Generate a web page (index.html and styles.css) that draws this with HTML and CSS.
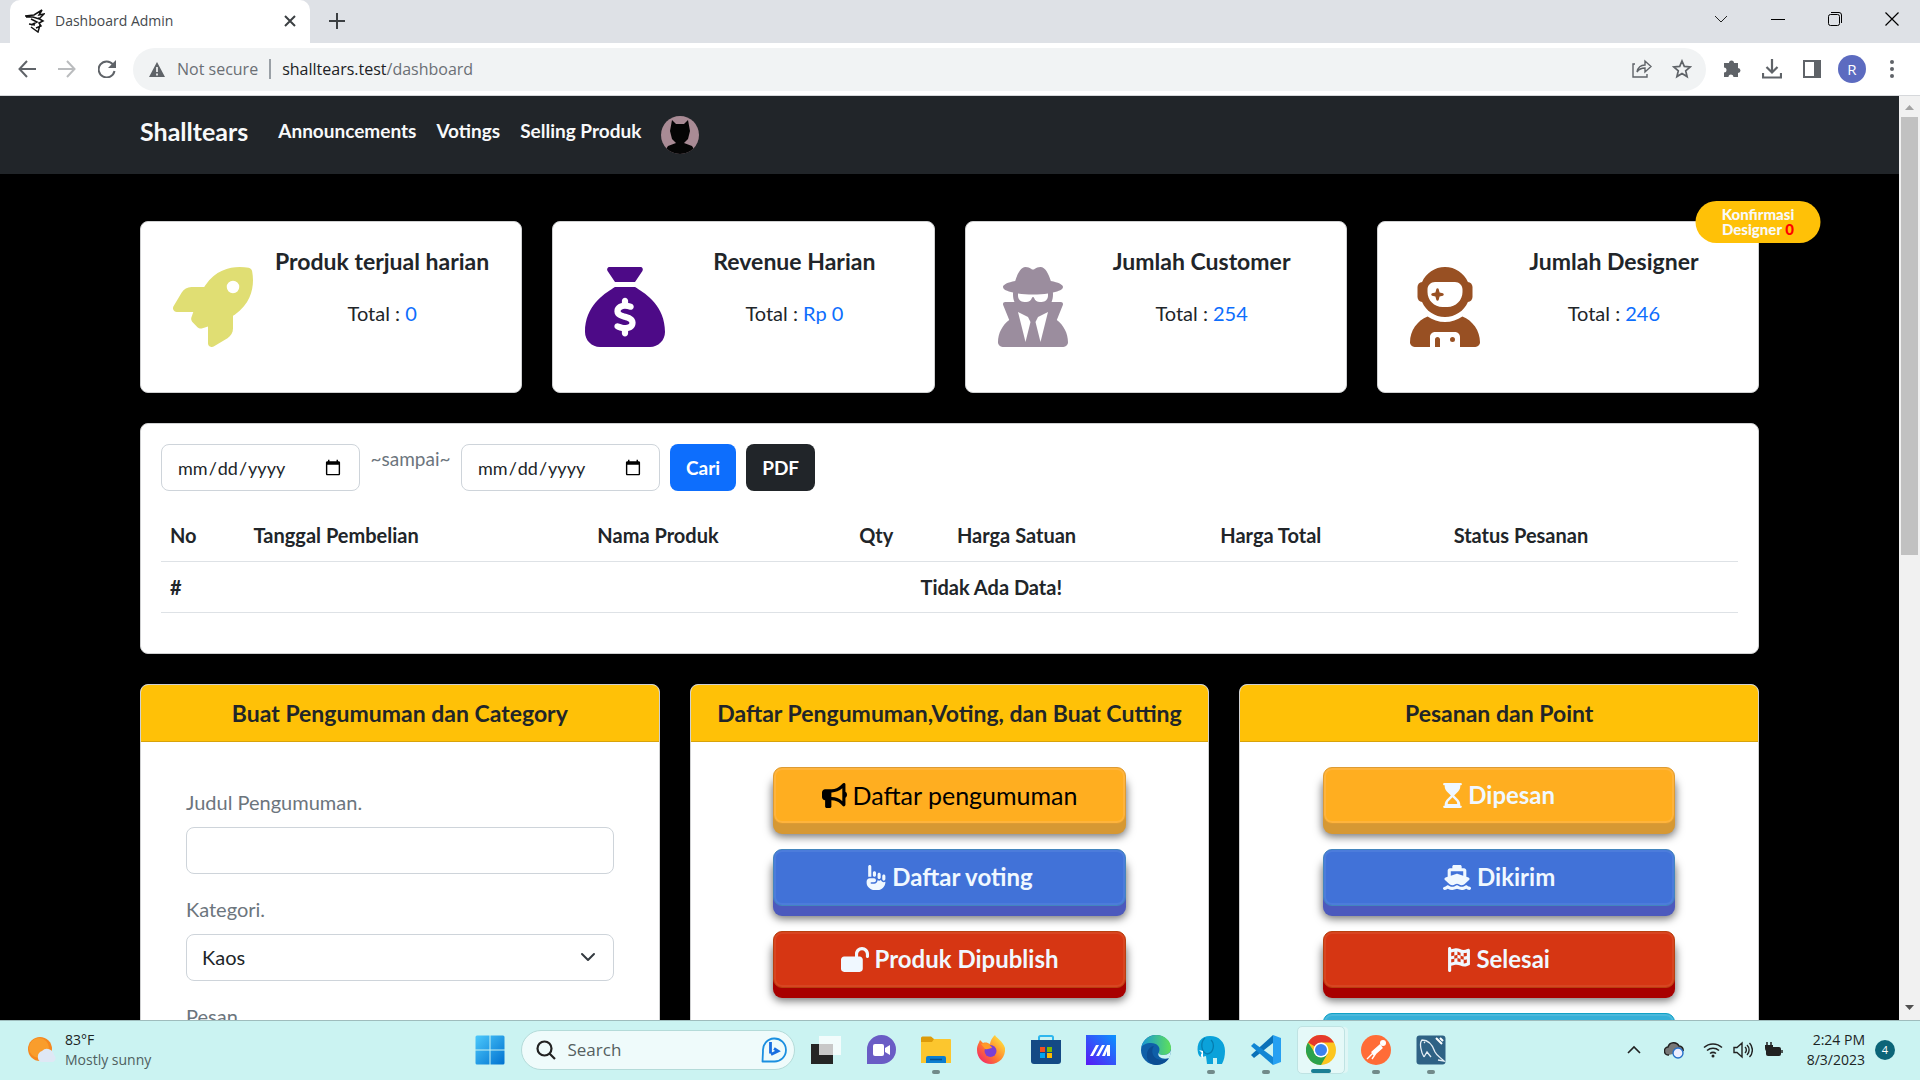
FILE: index.html
```html
<!DOCTYPE html>
<html lang="id">
<head>
<meta charset="utf-8">
<title>Dashboard Admin</title>
<link rel="stylesheet" href="styles.css">
</head>
<body>
<header class="browser">
  <div class="tabstrip">
    <div class="tab">
      <svg class="favicon" viewBox="0 0 20 24" fill="none" stroke="#111" stroke-width="1.500"><path d="M0 7l9-1 8-5-3 5 5-1-5 5-6-2-7 0M6 10l6 3-6 3M13 9l5 3-4 2 2 3-5 2M4 15l6 1M6 18l7 5 2-7"/></svg>
      <span class="tab-title">Dashboard Admin</span>
      <button class="plain" aria-label="Close tab"><svg width="12" height="12" viewBox="0 0 12 12" stroke="#3c4043" stroke-width="2"><path d="M1 1l10 10M11 1L1 11"/></svg></button>
    </div>
    <button class="plain newtab" aria-label="New tab"><svg width="16" height="16" viewBox="0 0 16 16" stroke="#3c4043" stroke-width="2"><path d="M8 0v16M0 8h16"/></svg></button>
    <div class="window-controls">
      <button class="plain" aria-label="Search tabs"><svg width="14" height="14" viewBox="0 0 14 14" fill="none" stroke="#222"><path d="M1 4l6 6 6-6"/></svg></button>
      <button class="plain" aria-label="Minimize"><svg width="14" height="14" viewBox="0 0 14 14" stroke="#000"><path d="M0 7.500h14"/></svg></button>
      <button class="plain" aria-label="Restore"><svg width="14" height="14" viewBox="0 0 14 14" fill="none" stroke="#000"><rect x=".5" y="2.500" width="11" height="11" rx="2"/><path d="M3 .5h8a2.500 2.500 0 0 1 2.500 2.500v8"/></svg></button>
      <button class="plain" aria-label="Close"><svg width="14" height="14" viewBox="0 0 14 14" stroke="#000" stroke-width="1.200"><path d="M.5.5l13 13M13.500.5l-13 13"/></svg></button>
    </div>
  </div>
  <div class="toolbar">
    <button class="plain" aria-label="Back"><svg width="18" height="18" viewBox="0 0 18 18" fill="none" stroke="#5f6368" stroke-width="2"><path d="M18 9H2M9 1L1.500 9 9 17"/></svg></button>
    <button class="plain" aria-label="Forward"><svg width="18" height="18" viewBox="0 0 18 18" fill="none" stroke="#babcbe" stroke-width="2"><path d="M0 9h16M9 1l7.500 8L9 17"/></svg></button>
    <button class="plain" aria-label="Reload"><svg width="18" height="18" viewBox="0 0 18 18"><path d="M15 4.500A8 8 0 1 0 16.500 11" fill="none" stroke="#5f6368" stroke-width="2"/><path d="M18 0v8h-8z" fill="#5f6368"/></svg></button>
    <div class="omnibox">
      <svg width="16" height="15" viewBox="0 0 16 15"><path d="M8 0l8 15H0z" fill="#5f6368"/><path d="M8 5v5M8 11.500v2" stroke="#fff" stroke-width="1.600"/></svg>
      <span class="muted">Not secure</span><span class="divider"></span>
      <span class="url">shalltears.test<span class="muted">/dashboard</span></span>
      <span class="omni-actions">
        <svg width="20" height="20" viewBox="0 0 20 20" fill="none" stroke="#5f6368" stroke-width="1.400"><path d="M3 5H1v13h14v-3M5 13c1-5 4-7 8-7V2l6 5.500L13 13V9c-4 0-6 1-8 4z"/></svg>
        <svg width="20" height="20" viewBox="0 0 20 20" fill="none" stroke="#5f6368" stroke-width="1.700"><path d="M10 2l2.300 5.400 5.900.5-4.500 3.900 1.400 5.800L10 14.500l-5.100 3.100 1.400-5.800-4.500-3.900 5.900-.5z"/></svg>
      </span>
    </div>
    <button class="plain" aria-label="Extensions"><svg width="20" height="20" viewBox="0 0 20 20" fill="#5f6368"><path d="M2 4h5a2.500 2.500 0 0 1 5 0h4v5a2.500 2.500 0 0 1 0 5v4h-4.500a2.500 2.500 0 0 0-5 0H2v-4.500a2.500 2.500 0 0 0 0-5z"/></svg></button>
    <button class="plain" aria-label="Downloads"><svg width="20" height="20" viewBox="0 0 20 20" fill="none" stroke="#5f6368" stroke-width="2.200"><path d="M10 0v13M4.500 8l5.500 5.500L15.500 8M1 14v4.500h18V14"/></svg></button>
    <button class="plain" aria-label="Side panel"><svg width="18" height="18" viewBox="0 0 18 18"><path d="M0 0h18v18H0zM2 2v14h9V2z" fill="#5f6368" fill-rule="evenodd"/></svg></button>
    <button class="plain profile" aria-label="Profile">R</button>
    <button class="plain" aria-label="Menu"><svg width="4" height="18" viewBox="0 0 4 18" fill="#5f6368"><circle cx="2" cy="2" r="2"/><circle cx="2" cy="9" r="2"/><circle cx="2" cy="16" r="2"/></svg></button>
  </div>
</header>

<div class="viewport">
  <div class="page">
    <nav class="navbar">
      <a class="brand" href="#">Shalltears</a>
      <a href="#">Announcements</a>
      <a href="#">Votings</a>
      <a href="#">Selling Produk</a>
      <a href="#" class="avatar" aria-label="Profil"><svg width="38" height="38" viewBox="0 0 38 38"><defs><clipPath id="av"><circle cx="19" cy="19" r="19"/></clipPath></defs><g clip-path="url(#av)"><path fill="#a98b95" d="M0 0h38v38H0z"/><path d="M11 4l4 4h8l4-4 2 11-2 8-4 4 8 3 5 8H2l5-8 8-3-4-4-2-8z" fill="#050505"/></g></svg></a>
    </nav>
    <main class="content">
      <section class="stats">
        <article class="card stat">
          <svg class="stat-icon" viewBox="0 0 512 512" fill="#e0de73"><path d="M156.600 384.900L125.700 354c-8.500-8.500-11.500-20.800-7.700-32.200c3-8.900 7-20.500 11.800-33.800L24 288c-8.600 0-16.600-4.600-20.900-12.100s-4.200-16.700 .2-24.100l52.500-88.500c13-21.900 36.500-35.300 61.900-35.300l82.300 0c2.400-4 4.800-7.700 7.200-11.300C289.100-4.100 411.100-8.100 483.900 5.300c11.600 2.100 20.600 11.200 22.800 22.800c13.400 72.900 9.300 194.800-111.400 276.700c-3.500 2.400-7.300 4.800-11.300 7.200v82.300c0 25.400-13.400 49-35.300 61.900l-88.500 52.500c-7.400 4.400-16.600 4.500-24.100 .2s-12.100-12.200-12.100-20.900V380.800c-14.100 4.900-26.400 8.900-35.700 11.900c-11.200 3.600-23.400 .5-31.800-7.800zM384 168a40 40 0 1 0 0-80 40 40 0 1 0 0 80z"/></svg>
          <div class="stat-text"><h2>Produk terjual harian</h2><p>Total : <a href="#">0</a></p></div>
        </article>
        <article class="card stat">
          <svg class="stat-icon" viewBox="0 0 512 512" fill="#4d0a87"><path d="M320 96H192L144.600 24.900C137.500 14.200 145.100 0 157.900 0H354.100c12.800 0 20.400 14.200 13.300 24.900L320 96zM192 128H320c3.800 2.500 8.100 5.300 13 8.400C389.700 172.700 512 250.900 512 416c0 53-43 96-96 96H96c-53 0-96-43-96-96C0 250.900 122.300 172.700 179 136.400l0 0 0 0c4.800-3.100 9.200-5.900 13-8.400zm84 88c0-11-9-20-20-20s-20 9-20 20v14c-7.600 1.700-15.200 4.400-22.200 8.500c-13.900 8.300-25.900 22.800-25.800 43.900c.1 20.300 12 33.100 24.700 40.700c11 6.600 24.700 10.800 35.600 14l1.700 .5c12.600 3.800 21.800 6.800 28 10.700c5.100 3.200 5.800 5.400 5.900 8.200c.1 5-1.800 8-5.900 10.500c-5 3.100-12.900 5-21.400 4.700c-11.100-.4-21.500-3.900-35.100-8.500c-2.300-.8-4.700-1.600-7.200-2.400c-10.500-3.500-21.800 2.200-25.300 12.600s2.200 21.800 12.600 25.300c1.900 .6 4 1.300 6.100 2.100l0 0 0 0c8.300 2.900 17.900 6.200 28.200 8.400V424c0 11 9 20 20 20s20-9 20-20V410.200c8-1.700 16-4.500 23.200-9c14.300-8.900 25.100-24.100 24.800-45c-.3-20.300-11.700-33.400-24.600-41.600c-11.500-7.200-25.900-11.600-37.100-15l-.7-.2c-12.800-3.900-21.900-6.700-28.300-10.500c-5.200-3.100-5.300-4.900-5.300-6.700c0-3.700 1.400-6.500 6.200-9.300c5.400-3.200 13.600-5.100 21.500-5c9.600 .1 20.200 2.200 31.200 5.200c10.700 2.800 21.600-3.500 24.500-14.200s-3.500-21.600-14.200-24.500c-6.500-1.700-13.700-3.400-21.100-4.700V216z"/></svg>
          <div class="stat-text"><h2>Revenue Harian</h2><p>Total : <a href="#">Rp 0</a></p></div>
        </article>
        <article class="card stat">
          <svg class="stat-icon narrow" viewBox="0 0 448 512" fill="#9b8d9e"><path d="M224 16c-6.700 0-10.800-2.800-15.500-6.100C201.900 5.400 194 0 176 0c-30.500 0-52 43.700-66 89.400C62.700 98.100 32 112.200 32 128c0 14.300 25 27.100 64.600 35.900c-.4 4-.6 8-.6 12.100c0 17 3.300 33.200 9.300 48H45.400C38 224 32 230 32 237.400c0 1.700 .3 3.400 1 5l38.800 96.900C28.200 371.800 0 423.800 0 482.300C0 498.700 13.300 512 29.700 512H418.300c16.400 0 29.700-13.300 29.700-29.700c0-58.500-28.200-110.400-71.700-143L415 242.400c.6-1.600 1-3.300 1-5c0-7.400-6-13.400-13.400-13.400H342.700c6-14.800 9.300-31 9.300-48c0-4.100-.2-8.100-.6-12.100C391 155.100 416 142.300 416 128c0-15.800-30.700-29.900-78-38.600C324 43.700 302.500 0 272 0c-18 0-25.900 5.400-32.500 9.900c-4.800 3.300-8.800 6.100-15.500 6.100zm56 208H267.600c-16.500 0-31.100-10.600-36.300-26.200c-2.300-7-12.200-7-14.500 0c-5.200 15.600-19.900 26.200-36.300 26.200H168c-22.100 0-40-17.900-40-40V169.600c28.200 4.100 61 6.400 96 6.400s67.800-2.300 96-6.400V184c0 22.100-17.900 40-40 40zm-88 96l16 32L176 480 128 288l64 32zm128-32L272 480 240 352l16-32 64-32z"/></svg>
          <div class="stat-text"><h2>Jumlah Customer</h2><p>Total : <a href="#">254</a></p></div>
        </article>
        <article class="card stat">
          <svg class="stat-icon narrow" viewBox="0 0 448 512" fill="#985023"><path d="M370.700 96.100C346.100 39.500 289.700 0 224 0S101.900 39.500 77.300 96.100C60.900 97.500 48 111.200 48 128v64c0 16.800 12.900 30.500 29.300 31.900C101.900 280.500 158.300 320 224 320s122.100-39.500 146.700-96.100c16.400-1.400 29.300-15.100 29.300-31.900V128c0-16.800-12.900-30.500-29.300-31.900zM336 144v16c0 53-43 96-96 96H208c-53 0-96-43-96-96V144c0-26.500 21.500-48 48-48H288c26.500 0 48 21.500 48 48zM189.300 162.700l-6-21.200c-.9-3.300-3.900-5.500-7.300-5.500s-6.400 2.200-7.300 5.500l-6 21.200-21.200 6c-3.300 .9-5.500 3.900-5.500 7.300s2.200 6.400 5.500 7.300l21.200 6 6 21.200c.9 3.300 3.900 5.500 7.300 5.500s6.400-2.200 7.300-5.500l6-21.200 21.200-6c3.300-.9 5.500-3.900 5.500-7.300s-2.200-6.400-5.500-7.300l-21.200-6zM112.700 316.500C46.700 342.600 0 407 0 482.300C0 498.700 13.300 512 29.700 512H128V448c0-17.700 14.300-32 32-32H288c17.700 0 32 14.300 32 32v64l98.300 0c16.400 0 29.700-13.300 29.700-29.700c0-75.300-46.700-139.700-112.700-165.800C303.900 338.800 265.500 352 224 352s-79.900-13.200-111.300-35.500zM176 448c-8.800 0-16 7.200-16 16v48h32V464c0-8.800-7.200-16-16-16zm96 32a16 16 0 1 0 0-32 16 16 0 1 0 0 32z"/></svg>
          <div class="stat-text"><h2>Jumlah Designer</h2><p>Total : <a href="#">246</a></p></div>
          <a class="pill" href="#">Konfirmasi<br>Designer <span>0</span></a>
        </article>
      </section>

      <section class="card report">
        <form class="filter">
          <input class="field" type="date" aria-label="Dari tanggal">
          <span class="sampai">~sampai~</span>
          <input class="field" type="date" aria-label="Sampai tanggal">
          <button class="btn blue" type="button">Cari</button>
          <button class="btn dark" type="button">PDF</button>
        </form>
        <table class="orders">
          <colgroup><col class="c-no"><col class="c-date"><col class="c-name"><col class="c-qty"><col class="c-price"><col class="c-total"><col></colgroup>
          <thead><tr><th>No</th><th>Tanggal Pembelian</th><th>Nama Produk</th><th>Qty</th><th>Harga Satuan</th><th>Harga Total</th><th>Status Pesanan</th></tr></thead>
          <tbody><tr><th>#</th><td colspan="6">Tidak Ada Data!</td></tr></tbody>
        </table>
      </section>

      <section class="panels">
        <article class="card panel">
          <h2 class="panel-head">Buat Pengumuman dan Category</h2>
          <form class="form">
            <label for="judul">Judul Pengumuman.</label>
            <input class="field" id="judul" type="text">
            <label for="kategori">Kategori.</label>
            <span class="select"><select class="field" id="kategori"><option>Kaos</option></select><svg width="16" height="16" viewBox="0 0 16 16" fill="none" stroke="#343a40" stroke-width="2" stroke-linecap="round" stroke-linejoin="round"><path d="M2 5l6 6 6-6"/></svg></span>
            <label for="pesan">Pesan.</label>
            <textarea class="field" id="pesan" rows="3"></textarea>
          </form>
        </article>
        <article class="card panel">
          <h2 class="panel-head">Daftar Pengumuman,Voting, dan Buat Cutting</h2>
          <div class="actions">
            <button class="push amber black"><svg width="25" height="25" viewBox="0 0 512 512"><path d="M480 32c0-12.900-7.800-24.600-19.800-29.600s-25.700-2.200-34.900 6.900L381.700 53c-48 48-113.100 75-181 75H192 160 64c-35.300 0-64 28.700-64 64v96c0 35.300 28.700 64 64 64l0 128c0 17.700 14.300 32 32 32h64c17.700 0 32-14.300 32-32V352l8.700 0c67.900 0 133 27 181 75l43.600 43.600c9.200 9.200 22.900 11.900 34.900 6.900s19.800-16.600 19.800-29.600V300.400c18.600-8.800 32-32.500 32-60.400s-13.400-51.600-32-60.400V32zm-64 76.700V240 371.300C357.200 317.800 280.500 288 200.700 288H192V192h8.700c79.800 0 156.500-29.800 215.300-83.300z"/></svg>Daftar pengumuman</button>
            <button class="push azure"><svg width="20" height="25" viewBox="0 0 384 512"><path d="M32 32C32 14.300 46.300 0 64 0S96 14.300 96 32V240H32V32zM224 192c0-17.700 14.300-32 32-32s32 14.300 32 32v64c0 17.700-14.300 32-32 32s-32-14.300-32-32V192zm-64-64c17.700 0 32 14.300 32 32v48c0 17.700-14.300 32-32 32s-32-14.300-32-32V160c0-17.700 14.300-32 32-32zm160 96c0-17.700 14.300-32 32-32s32 14.300 32 32v64c0 17.700-14.300 32-32 32s-32-14.300-32-32V224zm-96 88l0-.6c9.400 5.400 20.300 8.600 32 8.600c13.200 0 25.400-4 35.600-10.800c8.700 24.900 32.500 42.800 60.400 42.800c11.700 0 22.600-3.100 32-8.600V352c0 88.400-71.600 160-160 160H162.300c-42.400 0-83.100-16.900-113.100-46.900L37.500 453.500C13.500 429.500 0 396.900 0 363V336c0-35.300 28.700-64 64-64h88c22.100 0 40 17.900 40 40s-17.900 40-40 40H96c-8.800 0-16 7.200-16 16s7.200 16 16 16h56c39.800 0 72-32.200 72-72z"/></svg>Daftar voting</button>
            <button class="push red"><svg width="28" height="25" viewBox="0 0 576 512"><path d="M352 144c0-44.200 35.800-80 80-80s80 35.800 80 80v48c0 17.700 14.300 32 32 32s32-14.300 32-32V144C576 64.500 511.500 0 432 0S288 64.500 288 144v48H64c-35.300 0-64 28.700-64 64V448c0 35.300 28.700 64 64 64H384c35.300 0 64-28.700 64-64V256c0-35.300-28.700-64-64-64H352V144z"/></svg>Produk Dipublish</button>
          </div>
        </article>
        <article class="card panel">
          <h2 class="panel-head">Pesanan dan Point</h2>
          <div class="actions">
            <button class="push amber"><svg width="19" height="25" viewBox="0 0 384 512"><path d="M0 24C0 10.700 10.700 0 24 0H360c13.300 0 24 10.700 24 24s-10.700 24-24 24h-8V67c0 40.300-16 79-44.500 107.500L225.900 256l81.500 81.500C336 366 352 404.700 352 445v19h8c13.300 0 24 10.700 24 24s-10.700 24-24 24H24c-13.300 0-24-10.700-24-24s10.700-24 24-24h8V445c0-40.300 16-79 44.500-107.500L158.100 256 76.500 174.500C48 146 32 107.300 32 67V48H24C10.700 48 0 37.300 0 24zM192 289.900l-81.500 81.500C91 391 96 400 96 432H288c0-32-5-41-14.500-60.500L192 289.900z" fill-rule="evenodd"/></svg>Dipesan</button>
            <button class="push azure"><svg width="28" height="25" viewBox="0 0 576 512"><path d="M192 32c0-17.700 14.300-32 32-32H352c17.700 0 32 14.300 32 32V64h48c26.500 0 48 21.500 48 48V240l44.400 14.800c23.100 7.700 29.500 37.500 11.500 53.900l-101 92.600c-16.200 9.400-34.700 15.100-50.900 15.100c-19.600 0-40.800-7.700-59.200-20.300c-22.100-15.500-51.600-15.500-73.700 0c-17.100 11.800-38 20.300-59.200 20.300c-16.200 0-34.700-5.700-50.900-15.100l-101-92.600c-18-16.500-11.600-46.200 11.500-53.900L96 240V112c0-26.500 21.500-48 48-48h48V32zM160 218.700l107.800-35.900c13.100-4.400 27.300-4.400 40.500 0L416 218.700V128H160v90.700zM306.500 421.900C329 437.400 356.500 448 384 448c26.900 0 55.400-10.800 77.400-26.100l0 0c11.900-8.500 28.100-7.800 39.200 1.700c14.400 11.900 32.500 21 50.600 25.200c17.200 4 27.900 21.200 23.900 38.400s-21.200 27.900-38.400 23.900c-24.500-5.700-44.900-16.500-58.200-25C449.500 501.700 417 512 384 512c-31.900 0-60.600-9.900-80.400-18.900c-5.800-2.700-11.100-5.300-15.600-7.700c-4.500 2.400-9.700 5.100-15.600 7.700c-19.800 9-48.500 18.900-80.400 18.900c-33 0-65.500-10.300-94.500-25.800c-13.400 8.400-33.700 19.300-58.200 25c-17.200 4-34.400-6.700-38.400-23.900s6.700-34.400 23.900-38.400c18.100-4.200 36.200-13.300 50.600-25.200c11.100-9.400 27.300-10.100 39.200-1.700l0 0C136.700 437.200 165.100 448 192 448c27.500 0 55-10.600 77.500-26.100c11.100-7.900 25.900-7.900 37 0z"/></svg>Dikirim</button>
            <button class="push red"><svg width="22" height="25" viewBox="0 0 448 512"><path d="M32 0C49.700 0 64 14.300 64 32V48l69-17.200c38.100-9.500 78.300-5.100 113.500 12.500c46.300 23.200 100.800 23.200 147.100 0l9.600-4.800C423.800 28.100 448 43.100 448 66.100V345.800c0 13.300-8.300 25.300-20.800 30l-34.700 13c-46.200 17.300-97.600 14.600-141.700-7.400c-37.900-19-81.300-23.700-122.500-13.400L64 384v96c0 17.700-14.300 32-32 32s-32-14.300-32-32V400 334 64 32C0 14.300 14.300 0 32 0zM64 187.100l64-13.900v65.500L64 252.600V318l48.800-12.200c5.100-1.300 10.100-2.400 15.200-3.300V238.700l38.900-8.400c8.300-1.800 16.700-2.500 25.100-2.100l0-64c13.600 .4 27.200 2.600 40.400 6.400l23.600 6.900v66.700l-41.700-12.300c-7.300-2.100-14.800-3.400-22.300-3.800v71.400c21.800 1.900 43.300 6.700 64 14.400V244.200l22.700 6.700c13.500 4 27.300 6.400 41.300 7.400V194c-7.800-.8-15.600-2.300-23.200-4.500l-40.800-12v-62c-13-3.800-25.800-8.800-38.200-15c-8.200-4.100-16.900-7-25.800-8.800v72.400c-13-.4-26 .8-38.700 3.600L128 173.200V98L64 114v73.100zM320 335.700c16.800 1.500 33.900-.7 50-6.800l14-5.200V251.900l-7.900 1.800c-18.400 4.300-37.300 5.700-56.100 4.500v77.400zm64-149.400V115.400c-20.900 6.100-42.400 9.100-64 9.100V194c13.900 1.400 28 .5 41.700-2.600l22.300-5.200z"/></svg>Selesai</button>
            <button class="push cyan" aria-label="Point"></button>
          </div>
        </article>
      </section>
    </main>
  </div>
  <div class="scrollbar">
    <svg width="9" height="6" viewBox="0 0 9 6"><path d="M4.500 0L9 5H0z" fill="#a3a3a3"/></svg>
    <div class="thumb"></div>
    <svg width="9" height="6" viewBox="0 0 9 6"><path d="M4.500 5L9 0H0z" fill="#505050"/></svg>
  </div>
</div>

<footer class="taskbar">
  <div class="weather">
    <svg width="30" height="28" viewBox="0 0 30 28"><circle cx="13" cy="13" r="12" fill="#f5871f"/><circle cx="12" cy="12" r="10" fill="#f99d2c"/><path d="M14 26a6 6 0 0 1 1-11 7 7 0 0 1 12 4 4 4 0 0 1-1 7z" fill="#dfe8f5"/></svg>
    <div>83°F<br><span>Mostly sunny</span></div>
  </div>
  <div class="apps">
    <button class="app" aria-label="Start"><svg viewBox="0 0 30 30"><defs><linearGradient id="win" x1="0" y1="0" x2="1" y2="1"><stop offset="0" stop-color="#4cc8fb"/><stop offset="1" stop-color="#0071d0"/></linearGradient></defs><path fill="url(#win)" d="M2 .5h12.500v14H.5V2A1.500 1.500 0 0 1 2 .5zM15.500.5H28A1.500 1.500 0 0 1 29.500 2v12.500h-14zM.5 15.500h14v14H2A1.500 1.500 0 0 1 .5 28zM15.500 15.500h14V28a1.500 1.500 0 0 1-1.500 1.500H15.500z"/></svg></button>
    <div class="search">
      <svg width="20" height="20" viewBox="0 0 20 20" fill="none" stroke="#222" stroke-width="2.200"><circle cx="8.500" cy="8.500" r="7"/><path d="M13.500 13.500L19 19"/></svg>
      <input type="search" placeholder="Search" aria-label="Search">
      <svg width="26" height="26" viewBox="0 0 26 26" fill="none"><path d="M1.500 24.500L2 14A11.500 11.500 0 1 1 13 24.500z" stroke="#1b8fe0" stroke-width="1.800" stroke-linejoin="round"/><path d="M9.500 5v11.500M10 17.500l7-3.500-4-2.500" stroke="#1a6fe0" stroke-width="2.800"/></svg>
    </div>
    <button class="app" aria-label="Task view"><svg viewBox="0 0 30 30"><path fill="#252525" d="M0 9h22v20H0z"/><path fill="#fff" fill-opacity=".75" d="M8 1h22v19H8z"/></svg></button>
    <button class="app" aria-label="Chat"><svg viewBox="0 0 30 30"><path d="M1 29V15A14.500 14.500 0 1 1 15 29z" fill="#6a5cc5"/><rect x="7" y="9" width="11" height="12" rx="2" fill="#fff"/><path d="M19 13l5-3v10l-5-3z" fill="#fff"/></svg></button>
    <button class="app open" aria-label="File Explorer"><svg viewBox="0 0 30 30"><path d="M0 3a1.500 1.500 0 0 1 1.500-1.500H10L13 4v5H0z" fill="#dd9b0a"/><path d="M0 7h11l2-3h16a1 1 0 0 1 1 1v23H0z" fill="#fcc62e"/><path d="M5 28v-5a2 2 0 0 1 2-2h16a2 2 0 0 1 2 2v5z" fill="#0b7ed0"/><path d="M9 24.500h12" stroke="#064f8c" stroke-width="1.500"/></svg></button>
    <button class="app" aria-label="Firefox"><svg viewBox="0 0 30 30"><defs><linearGradient id="ff" x1="1" y1="0" x2="0" y2="1"><stop offset=".1" stop-color="#ffe63d"/><stop offset=".55" stop-color="#ff7a2d"/><stop offset="1" stop-color="#f0127a"/></linearGradient></defs><path d="M19 0c1 3 8 6 10 13C30 22 23 29 15 29S1 23 1 15c0-5 2-7 3-10l3 3c3-1 5 0 7 1 1-5 3-7 5-9z" fill="url(#ff)"/><circle cx="14.500" cy="16" r="6" fill="#7a3fd4"/><path d="M5 9c5-2 10 1 11 4-3 0-4 2-7 1z" fill="#ff9a2a"/></svg></button>
    <button class="app" aria-label="Store"><svg viewBox="0 0 30 30"><path d="M8 8V2.500A1.500 1.500 0 0 1 9.500 1h11A1.500 1.500 0 0 1 22 2.500V8" fill="none" stroke="#2fb7ee" stroke-width="2"/><path d="M0 5h30v21a3 3 0 0 1-3 3H3a3 3 0 0 1-3-3z" fill="#144a85"/><path fill="#f25022" d="M9 12h5v5H9z"/><path fill="#7fba00" d="M16 12h5v5h-5z"/><path fill="#00a4ef" d="M9 18h5v5H9z"/><path fill="#ffb900" d="M16 18h5v5h-5z"/></svg></button>
    <button class="app" aria-label="MyASUS"><svg viewBox="0 0 30 30"><defs><linearGradient id="as" x1="1" y1="0" x2="0" y2="1"><stop offset="0" stop-color="#0a94ff"/><stop offset="1" stop-color="#5a17f5"/></linearGradient></defs><path fill="url(#as)" d="M0 0h30v30H0z"/><path d="M4 21l6-11h3L7 21zM10 21l6-11h3l-6 11zM16 21l5-11h3v11h-3v-5l-2 5z" fill="#fff"/></svg></button>
    <button class="app" aria-label="Edge"><svg viewBox="0 0 30 30"><defs><linearGradient id="ed"><stop offset="0" stop-color="#1596d8"/><stop offset="1" stop-color="#5fe05a"/></linearGradient></defs><circle cx="15" cy="15" r="15" fill="#0f5fa8"/><path d="M0 13C2 5 8 0 15 0c9 0 15 6 15 13 0 5-4 7-8 7-3 0-5-1-4-3 2-5-2-9-8-9-5 0-9 2-10 5z" fill="url(#ed)"/><path d="M13 11c-4 5-1 14 8 14 3 0 5-1 7-2-2 4-7 7-12 7C8 30 5 24 6 18c1-4 4-7 7-7z" fill="#0c4d93"/><path d="M18 17c-1 2 1 3 4 3s7-1 8-5c0 4-1 6-2 8-6 2-13-1-10-6z" fill="#cbf3f2"/></svg></button>
    <button class="app open" aria-label="Elephant"><svg viewBox="0 0 30 30"><path d="M2 18C0 8 5 1 14 1c9 0 15 6 15 15 0 5-1 9-3 13h-5v-6h-4v6h-6l-1-8-4 1c-2 0-3-1-4-4z" fill="#0ba2da"/><path d="M9 3c-5 4-4 14 2 16 7-1 8-10 4-14" fill="none" stroke="#067db0" stroke-width="1.300"/><path d="M3 15l4 1v7c-2-1-3-3-1-5z" fill="#fff"/></svg></button>
    <button class="app open" aria-label="VS Code"><svg viewBox="0 0 30 30"><path d="M22 0l8 3v24l-8 3z" fill="#26a0f2"/><path d="M22 0v8L3 23l-3-3z" fill="#0a71b8"/><path d="M22 30v-8L3 8l-3 3z" fill="#1186d4"/></svg></button>
    <button class="app open active" aria-label="Chrome"><svg viewBox="0 0 30 30"><circle cx="15" cy="15" r="15" fill="#fcc61f"/><path d="M15 15L2 7.500A15 15 0 0 1 28 7.500H15z" fill="#e53a2c"/><path d="M2 7.500A15 15 0 0 0 15 30l6.500-11.200L9 18z" fill="#2ba24c"/><circle cx="15" cy="15" r="7.500" fill="#fff"/><circle cx="15" cy="15" r="6" fill="#3b82f0"/></svg></button>
    <button class="app open" aria-label="Postman"><svg viewBox="0 0 30 30"><circle cx="15" cy="15" r="15" fill="#ff6c37"/><circle cx="22" cy="8" r="3" fill="#fff"/><path d="M19 10l-8 7 2 3 8-7zM12 18l-6 6M17 15l-6 9" fill="#fff" stroke="#fff" stroke-width="1.400"/></svg></button>
    <button class="app open" aria-label="MySQL Workbench"><svg viewBox="0 0 30 30"><rect x=".5" y=".5" width="29" height="29" rx="3" fill="#2f6285"/><path d="M8 22C5 17 3 8 6 5c7 0 11 6 13 12 2 4 5 5 9 9l-6-1M8 22l3-5 4 5M8 7l1 1" fill="none" stroke="#e5eef4" stroke-width="1.300"/><path d="M20 3l6 6M24 3l3 3" stroke="#fff" stroke-width="2"/></svg></button>
  </div>
  <div class="tray">
    <svg width="14" height="14" viewBox="0 0 14 14" fill="none" stroke="#222" stroke-width="1.600"><path d="M1 10l6-6 6 6"/></svg>
    <svg class="cloud" width="20" height="18" viewBox="0 0 20 18"><path d="M5 14a4 4 0 0 1-1-8 6 6 0 0 1 11-1 4 4 0 0 1 4 5" fill="#777" stroke="#222" stroke-width="1.500"/><circle cx="14" cy="12" r="5" fill="#eef" stroke="#2770c8" stroke-width="1.400"/></svg>
    <div class="status">
      <svg width="20" height="18" viewBox="0 0 20 18" fill="none" stroke="#222" stroke-width="1.500"><path d="M1 6.500a13 13 0 0 1 18 0M4 9.500a9 9 0 0 1 12 0M7 12.500a5 5 0 0 1 6 0"/><circle cx="10" cy="15" r="1.500" fill="#222" stroke="none"/></svg>
      <svg width="20" height="18" viewBox="0 0 20 18" fill="none" stroke="#222" stroke-width="1.400"><path d="M1 6.500h3l5-4.500v14l-5-4.500H1zM12 6a4 4 0 0 1 0 6M14 4a7 7 0 0 1 0 10M16.500 2a10 10 0 0 1 0 14"/></svg>
      <svg width="20" height="18" viewBox="0 0 20 18"><rect x="3" y="6" width="15" height="9" rx="2" fill="#222"/><path d="M19 9v3M4 1v4M8 1v4" stroke="#222" stroke-width="1.500"/><path d="M2 4h8v3a4 4 0 0 1-8 0z" fill="#222"/></svg>
    </div>
    <div class="clock">2:24 PM<br>8/3/2023</div>
    <span class="count">4</span>
  </div>
</footer>
</body>
</html>
```
FILE: styles.css
```css
* { box-sizing: border-box; }
body {
  margin: 0;
  height: 100vh;
  display: flex;
  flex-direction: column;
  overflow: hidden;
  font-family: Lato, "Noto Sans", sans-serif;
  font-size: 20px;
  line-height: 30px;
  color: #212529;
  background: #000;
}
a { color: inherit; text-decoration: none; }
h2, p { margin: 0; }
button, input, select, textarea { font: inherit; color: inherit; }
svg { flex: none; display: block; }
.plain { display: flex; align-items: center; justify-content: center; padding: 0; border: 0; background: none; }

/* Browser window */
.browser, .taskbar { flex: none; font-family: "Open Sans", sans-serif; font-size: 15px; line-height: 20px; }
.tabstrip { display: flex; height: 43px; padding-left: 10px; background: #dee1e6; }
.tab { display: flex; align-items: center; gap: 10px; width: 300px; height: 43px; padding: 0 14px 2px 15px; background: #fff; border-radius: 10px 10px 0 0; }
.favicon { width: 20px; height: 24px; }
.tab-title { flex: 1; font-size: 14px; color: #45494d; }
.newtab { width: 54px; height: 42px; }
.window-controls { display: flex; margin-left: auto; }
.window-controls .plain { width: 57px; height: 37px; }
.toolbar { display: flex; align-items: center; gap: 12px; height: 53px; padding: 0 14px 0 13px; background: #fff; border-bottom: 1px solid #d6d8db; }
.toolbar .plain { width: 28px; height: 28px; }
.omnibox { flex: 1; display: flex; align-items: center; gap: 12px; height: 43px; padding: 0 14px 0 16px; border-radius: 22px; background: #f1f3f4; font-size: 16px; color: #202124; }
.omnibox .muted { color: #6b6f74; }
.divider { width: 2px; height: 20px; margin: 0 -1px; background: #9aa0a6; }
.omni-actions { display: flex; gap: 20px; margin-left: auto; }
.toolbar .profile { border-radius: 50%; background: #5c6bc0; color: #fff; }

/* Page */
.viewport { flex: 1; min-height: 0; display: flex; }
.page { flex: 1; min-width: 0; overflow: hidden; }
.navbar { display: flex; align-items: center; gap: 20px; height: 78px; padding: 0 140px; background: #212529; color: #f8f9fa; font-size: 19px; font-weight: 700; }
.navbar a { padding-bottom: 8px; }
.navbar .avatar { padding: 0; }
.navbar .brand { margin-right: 10px; font-size: 25px; }
.content { display: flex; flex-direction: column; gap: 30px; padding: 47px 140px 0; }
.card { position: relative; background: #fff; border: 1px solid #cfd0d1; border-radius: 8px; }
.stats { display: grid; grid-template-columns: repeat(4, 1fr); gap: 30px; }
.stat { display: flex; align-items: flex-start; gap: 10px; height: 172px; padding: 24px 20px 0 32px; }
.stat-icon { width: 80px; height: 80px; margin-top: 21px; }
.stat-icon.narrow { width: 70px; }
.stat-text { flex: 1; text-align: center; }
.stat-text h2, .panel-head { font-size: 23px; line-height: 30px; font-weight: 700; white-space: nowrap; }
.stat-text p { margin-top: 22px; }
.stat-text a { color: #0d6efd; }
.pill { position: absolute; top: 0; right: 0; transform: translate(50%, -50%); width: 125px; padding: 6px 0; border-radius: 21px; background: #ffc107; color: #f8f9fa; font-size: 15px; line-height: 15px; font-weight: 900; text-align: center; }
.pill span { color: #f00; }

.report { padding: 20px 20px 40px; }
.filter { display: flex; align-items: flex-start; gap: 10px; margin-bottom: 19px; }
.field { width: 100%; height: 47px; padding: 0 15px; border: 1px solid #ced4da; border-radius: 8px; background: #fff; }
.filter .field { width: 199px; font-size: 18px; }
.sampai { color: #6c757d; height: 32px; width: 81px; font-size: 19px; text-align: center; }
.btn { height: 47px; padding: 0 16px; border: 0; border-radius: 8px; color: #fff; font-size: 19px; font-weight: 700; }
.blue { background: #0d6efd; }
.dark { background: #212529; }
.orders { width: 100%; table-layout: fixed; border-collapse: collapse; font-weight: 700; }
.orders th, .orders td { height: 51px; padding: 0 9px; text-align: left; border-bottom: 1px solid #dee2e6; }
.orders td { text-align: center; }
.c-no { width: 5.300%; }
.c-date { width: 21.800%; }
.c-name { width: 16.600%; }
.c-qty { width: 6.200%; }
.c-price { width: 16.700%; }
.c-total { width: 14.800%; }

.panels { display: grid; grid-template-columns: repeat(3, 1fr); gap: 30px; }
.panel-head { height: 57px; line-height: 56px; text-align: center; background: #ffc107; border-bottom: 1px solid #d8a30a; border-radius: 7px 7px 0 0; }
.form { display: flex; flex-direction: column; padding: 45px; }
.form label { color: #6c757d; line-height: 30px; margin-bottom: 10px; }
.form .field { margin-bottom: 20px; }
.select { display: grid; align-items: start; }
.select > * { grid-area: 1 / 1; }
.select select { appearance: none; }
.select svg { justify-self: end; margin: 15px 18px 0 0; pointer-events: none; }
.form textarea { height: 120px; }
.actions { display: flex; flex-direction: column; align-items: center; gap: 25px; padding: 25px 0 40px; }
.push { display: flex; align-items: center; justify-content: center; gap: 6px; width: 68%; height: 57px; padding: 0; border: 1px solid; border-radius: 9px; font-size: 24px; font-weight: 700; color: #f0f8ff; }
.push svg { fill: currentColor; }
.amber { background: #ffae20; border-color: #dd9b33; box-shadow: inset 0 0 0 2px #ffb43c, 0 10px 0 #d69833, 0 12px 8px 1px #0008; }
.azure { background: #4172d8; border-color: #4385bd; box-shadow: inset 0 0 0 2px #4c7cdb, 0 10px 0 #4c59bd, 0 12px 8px 1px #0008; }
.red { background: #d63613; border-color: #b7400f; box-shadow: inset 0 0 0 2px #d84521, 0 10px 0 #a80000, 0 12px 8px 1px #0008; }
.cyan { background: #36b0d8; border-color: #10a2c6; box-shadow: inset 0 0 0 2px #4ab8dc, 0 10px 0 #2590b0, 0 12px 8px 1px #0008; }
.push.black { color: #000; font-size: 25px; font-weight: 400; }

.scrollbar { flex: none; width: 21px; display: flex; flex-direction: column; align-items: center; padding: 9px 0; background: #f1f1f1; }
.thumb { width: 17px; height: 438px; margin: 6px 0 auto; background: #c1c1c1; }

/* Taskbar */
.taskbar { display: grid; grid-template-columns: 1fr auto 1fr; align-items: center; height: 60px; padding: 0 25px 2px; border-top: 1px solid #9fbcbd; background: #cbf3f2; color: #1c2424; }
.weather { display: flex; align-items: center; gap: 8px; padding-left: 2px; font-size: 14px; }
.weather span { color: #4f6060; }
.apps { display: flex; align-items: center; gap: 7px; }
.app { display: flex; align-items: center; justify-content: center; width: 48px; height: 48px; padding: 0; border: 0; border-radius: 5px; background: none; position: relative; }
.app svg { width: 30px; height: 30px; }
.app.open::after { content: ""; position: absolute; bottom: 0; width: 8px; height: 4px; border-radius: 2px; background: #718a8a; }
.app.active { background: #e5f9f8; border: 1px solid #bfe3e3; box-shadow: 4px 0 0 -1px #dff6f5; }
.app.active::after { width: 20px; background: #1b7f94; }
.search { display: flex; align-items: center; gap: 12px; width: 274px; height: 40px; padding: 0 7px 0 14px; border: 1px solid #b4dbd9; border-radius: 20px; background: #effbfb; }
.search input { flex: 1; min-width: 0; padding: 0; border: 0; background: none; font-size: 17px; }
.search input::placeholder { color: #555f5f; }
.tray { display: flex; align-items: center; justify-content: flex-end; gap: 10px; font-size: 14px; }
.cloud { margin: 0 9px 0 13px; }
.status { display: flex; gap: 10px; margin-right: 14px; }
.clock { text-align: right; }
.count { width: 20px; height: 20px; border-radius: 50%; background: #0c6478; color: #fff; font-size: 11px; text-align: center; }
```
